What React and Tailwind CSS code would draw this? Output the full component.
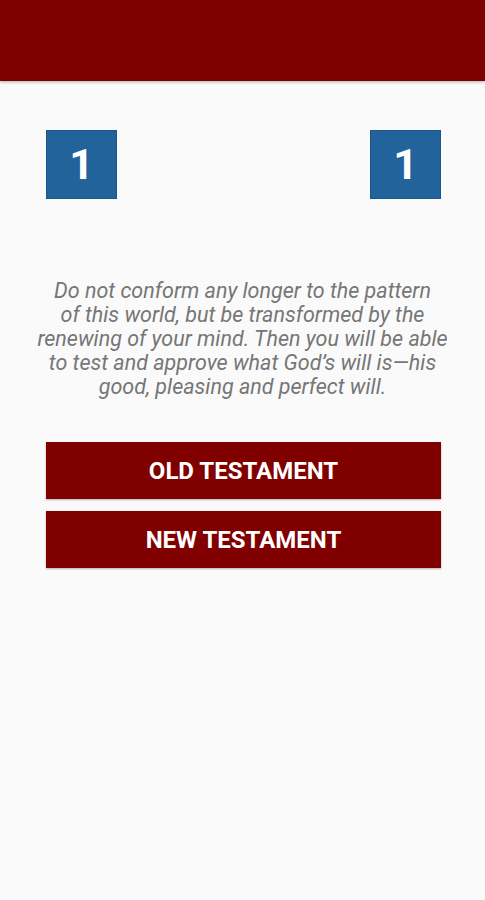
export default function App() {
  return (
    <div className="min-h-[900px] bg-[#fafafa] flex flex-col" style={{ fontFamily: 'Roboto, sans-serif' }}>
      {/* Toolbar */}
      <div className="h-[81px] bg-[#800000] shadow-[0_1px_3px_rgba(0,0,0,0.3)]" />

      {/* Counters */}
      <div className="flex justify-between pl-[46px] pr-[44px] pt-[49px]">
        <div className="w-[71px] h-[69px] bg-[#22639b] border border-[#1d5789] flex items-center justify-center text-white text-[43px] font-bold">
          1
        </div>
        <div className="w-[71px] h-[69px] bg-[#22639b] border border-[#1d5789] flex items-center justify-center text-white text-[43px] font-bold">
          1
        </div>
      </div>

      {/* Verse */}
      <p className="mt-[80px] px-[20px] text-center italic text-[21.5px] leading-[24px] text-[#767676]">
        Do not conform any longer to the pattern<br />
        of this world, but be transformed by the<br />
        renewing of your mind. Then you will be able<br />
        to test and approve what God’s will is—his<br />
        good, pleasing and perfect will.
      </p>

      {/* Buttons */}
      <div className="mt-[43px] pl-[46px] pr-[44px] flex flex-col gap-[12px]">
        <button className="h-[57px] bg-[#800000] text-white text-[24px] font-bold shadow-[0_1px_2px_rgba(0,0,0,0.3)]">
          OLD TESTAMENT
        </button>
        <button className="h-[57px] bg-[#800000] text-white text-[24px] font-bold shadow-[0_1px_2px_rgba(0,0,0,0.3)]">
          NEW TESTAMENT
        </button>
      </div>
    </div>
  )
}
